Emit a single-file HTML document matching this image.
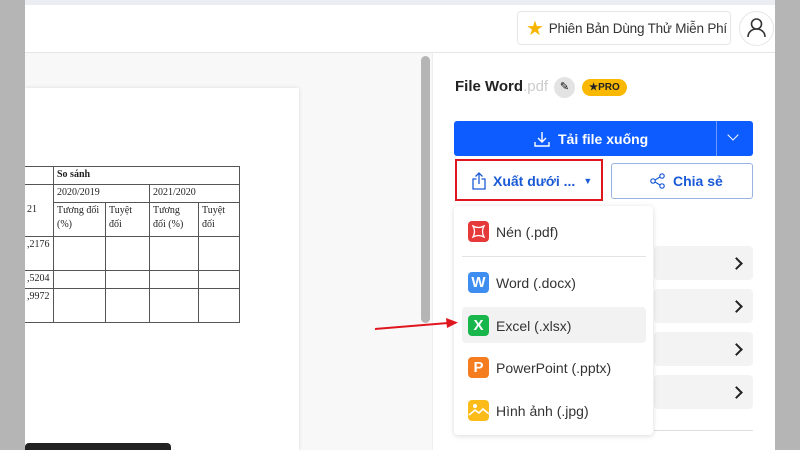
<!DOCTYPE html><html><head><meta charset="utf-8"><style>
*{box-sizing:border-box;margin:0;padding:0}
body{width:800px;height:450px;overflow:hidden;position:relative;background:#fff;font-family:"Liberation Sans",sans-serif}
.a{position:absolute}
td{border:1px solid #555;font-family:"Liberation Serif",serif;font-size:10px;color:#222;vertical-align:top;padding:1px 3px;line-height:14px;overflow:hidden}
table{border-collapse:collapse;table-layout:fixed}
.row{position:absolute;left:654px;width:99px;height:34px;background:#f3f3f3;border-radius:4px}
.row:after{content:"";position:absolute;right:12px;top:13px;width:7px;height:7px;border-right:2px solid #222;border-top:2px solid #222;transform:rotate(45deg)}
.it{position:absolute;left:468px;font-size:14px;color:#333;display:flex;align-items:center}
.ic{width:21px;height:21px;border-radius:4px;margin-right:7px;color:#fff;font-weight:bold;font-size:15px;display:flex;align-items:center;justify-content:center}
</style></head><body>
<div class="a" style="left:0;top:0;width:800px;height:5px;background:#ececf3"></div>
<div class="a" style="left:25px;top:52px;width:750px;height:1px;background:#e6e6e6"></div>
<div class="a" style="left:25px;top:53px;width:407px;height:397px;background:#f8f8f8"></div>
<div class="a" style="left:25px;top:88px;width:274px;height:362px;background:#fff;box-shadow:0 0 4px rgba(0,0,0,.12)"></div>
<table class="a" style="left:23px;top:166px;width:217px">
<colgroup><col style="width:30px"><col style="width:52px"><col style="width:44px"><col style="width:49px"><col></colgroup>
<tr style="height:18px"><td></td><td colspan="4"><b>So sánh</b></td></tr>
<tr style="height:18px"><td rowspan="2" style="padding-top:18px">21</td><td colspan="2">2020/2019</td><td colspan="2">2021/2020</td></tr>
<tr style="height:34px"><td>Tương đối (%)</td><td>Tuyệt đối</td><td>Tương đối (%)</td><td>Tuyệt đối</td></tr>
<tr style="height:34px"><td>,2176</td><td></td><td></td><td></td><td></td></tr>
<tr style="height:18px"><td>,5204</td><td></td><td></td><td></td><td></td></tr>
<tr style="height:34px"><td>,9972</td><td></td><td></td><td></td><td></td></tr>
</table>
<div class="a" style="left:25px;top:443px;width:146px;height:7px;background:#222;border-radius:4px 4px 0 0"></div>
<div class="a" style="left:421px;top:56px;width:9px;height:267px;background:#b5b5b5;border-radius:5px"></div>
<div class="a" style="left:432px;top:53px;width:1px;height:397px;background:#eee"></div>
<div class="a" style="left:0;top:0;width:25px;height:450px;background:#b5b5b5"></div>
<div class="a" style="left:775px;top:0;width:25px;height:450px;background:#b5b5b5"></div>
<div class="a" style="left:517px;top:11px;width:214px;height:34px;border:1px solid #e6e6e6;border-radius:4px;font-size:13.5px;color:#333;display:flex;align-items:center;padding-left:8px;white-space:nowrap;letter-spacing:-0.2px"><span style="color:#f7b500;font-size:20px;margin-right:5px">★</span>Phiên Bản Dùng Thử Miễn Phí</div>
<div class="a" style="left:739px;top:11px;width:35px;height:35px;border:1px solid #e6e6e6;border-radius:50%"><svg width="35" height="35" style="position:absolute;left:-1px;top:-1px"><circle cx="17.5" cy="13" r="5" fill="none" stroke="#333" stroke-width="1.6"/><path d="M9 26c0-5 4-8 8.5-8s8.5 3 8.5 8" fill="none" stroke="#333" stroke-width="1.6"/></svg></div>
<div class="a" style="left:455px;top:78px;font-size:15px;font-weight:bold;color:#222">File Word<span style="color:#ccc;font-weight:normal">.pdf</span></div>
<div class="a" style="left:554px;top:77px;width:21px;height:21px;border-radius:50%;background:#e3e3e3;font-size:11px;text-align:center;line-height:21px">✎</div>
<div class="a" style="left:582px;top:79px;width:45px;height:17px;border-radius:9px;background:#fbb800;font-size:10px;font-weight:bold;color:#222;text-align:center;line-height:17px">★PRO</div>
<div class="a" style="left:454px;top:121px;width:299px;height:35px;background:#0d5cff;border-radius:3px;color:#fff;font-weight:bold;font-size:14px;display:flex;align-items:center;padding-left:80px"><svg width="16" height="16" style="margin-right:8px"><path d="M8 1v10M4 7l4 4 4-4M1 11v4h14v-4" fill="none" stroke="#fff" stroke-width="1.4"/></svg>Tải file xuống</div>
<div class="a" style="left:716px;top:121px;width:1px;height:35px;background:#6b98ff"></div>
<div class="a" style="left:729px;top:131px;width:8px;height:8px;border-right:1.5px solid #fff;border-bottom:1.5px solid #fff;transform:rotate(45deg)"></div>
<div class="a" style="left:455px;top:159px;width:148px;height:42px;border:2px solid #e0161e"></div>
<div class="a" style="left:458px;top:163px;width:143px;height:35px;font-size:14px;font-weight:bold;color:#1a5ad6;display:flex;align-items:center;padding-left:14px"><svg width="14" height="18" style="margin-right:7px"><path d="M7 1v11M3.5 4.5L7 1l3.5 3.5M4.5 7H1v10h12V7H9.5" fill="none" stroke="#1a5ad6" stroke-width="1.3"/></svg>Xuất dưới ... <span style="font-size:9px;margin-left:8px">▼</span></div>
<div class="a" style="left:611px;top:163px;width:142px;height:36px;border:1px solid #9ab3e0;border-radius:3px;font-size:14px;font-weight:bold;color:#1a5ad6;display:flex;align-items:center;padding-left:38px"><svg width="16" height="16" style="margin-right:7px"><circle cx="12" cy="3" r="2.2" fill="none" stroke="#1a5ad6" stroke-width="1.2"/><circle cx="3" cy="8" r="2.2" fill="none" stroke="#1a5ad6" stroke-width="1.2"/><circle cx="12" cy="13" r="2.2" fill="none" stroke="#1a5ad6" stroke-width="1.2"/><path d="M5 7l5-3M5 9l5 3" stroke="#1a5ad6" stroke-width="1.2"/></svg>Chia sẻ</div>
<div class="row" style="top:246px"></div><div class="row" style="top:289px"></div><div class="row" style="top:332px"></div><div class="row" style="top:375px"></div>
<div class="a" style="left:654px;top:430px;width:99px;height:1px;background:#ddd"></div>
<div class="a" style="left:454px;top:206px;width:199px;height:229px;background:#fff;border-radius:4px;box-shadow:0 1px 6px rgba(0,0,0,.15)"></div>
<div class="a" style="left:462px;top:256px;width:184px;height:1px;background:#e3e3e3"></div>
<div class="a" style="left:462px;top:307px;width:184px;height:36px;background:#f2f2f2;border-radius:4px"></div>
<div class="it" style="top:221px"><div class="ic" style="background:#e63a3a"><svg width="13" height="13"><path d="M1 1Q6.5 4 12 1Q9 6.5 12 12Q6.5 9 1 12Q4 6.5 1 1Z" fill="none" stroke="#fff" stroke-width="1.3"/></svg></div>Nén (.pdf)</div>
<div class="it" style="top:272px"><div class="ic" style="background:#3d8ef0">W</div>Word (.docx)</div>
<div class="it" style="top:315px"><div class="ic" style="background:#19b64c">X</div>Excel (.xlsx)</div>
<div class="it" style="top:357px"><div class="ic" style="background:#f57c1f">P</div>PowerPoint (.pptx)</div>
<div class="it" style="top:400px"><div class="ic" style="background:#fbbc1a"><svg width="21" height="21"><circle cx="7" cy="6" r="2" fill="#fff"/><path d="M1 15l6-5 4 3 4-4 6 5" fill="none" stroke="#fff" stroke-width="1.6"/></svg></div>Hình ảnh (.jpg)</div>
<svg class="a" style="left:370px;top:315px" width="90" height="20"><path d="M5 14L78 8" stroke="#e0161e" stroke-width="2"/><path d="M88 7.5L76 3l1 10z" fill="#e0161e"/></svg>
</body></html>
